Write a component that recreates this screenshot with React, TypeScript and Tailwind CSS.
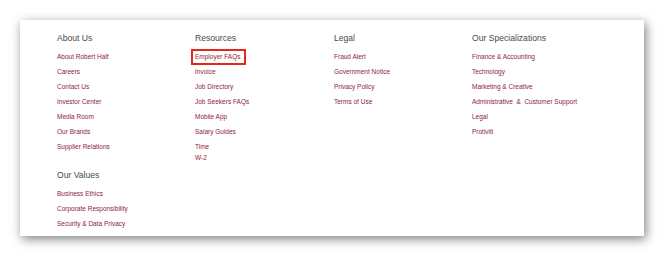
import React from 'react';

type Col = { title: string; links: string[] };

const FooterLink = ({ label, boxed }: { label: string; boxed?: boolean }) => (
  <li className="leading-[15px]">
    {boxed ? (
      <span className="inline-block leading-[8px] pr-[1px] outline-2 outline-solid outline-[#e0281c] outline-offset-[2px]">
        {label}
      </span>
    ) : (
      label
    )}
  </li>
);

const Heading = ({ children, className = '' }: { children: React.ReactNode; className?: string }) => (
  <h3 className={`text-[8.6px] leading-[12px] text-[#4a4a4a] ${className}`}>{children}</h3>
);

const LinkList = ({ links, boxed }: { links: string[]; boxed?: string }) => (
  <ul className="mt-[4.5px] text-[6.5px] text-[#8e1b3e]">
    {links.map((l) => (
      <FooterLink key={l} label={l} boxed={l === boxed} />
    ))}
  </ul>
);

const App = () => {
  const about: Col = {
    title: 'About Us',
    links: ['About Robert Half', 'Careers', 'Contact Us', 'Investor Center', 'Media Room', 'Our Brands', 'Supplier Relations'],
  };
  const values: Col = {
    title: 'Our Values',
    links: ['Business Ethics', 'Corporate Responsibility', 'Security & Data Privacy'],
  };
  const resources = ['Employer FAQs', 'Invoice', 'Job Directory', 'Job Seekers FAQs', 'Mobile App', 'Salary Guides'];
  const legal: Col = { title: 'Legal', links: ['Fraud Alert', 'Government Notice', 'Privacy Policy', 'Terms of Use'] };
  const specs: Col = {
    title: 'Our Specializations',
    links: [
      'Finance & Accounting',
      'Technology',
      'Marketing & Creative',
      'Administrative\u00a0 &\u00a0 Customer Support',
      'Legal',
      'Protiviti',
    ],
  };

  return (
    <div className="w-[664px] h-[256px] bg-white pt-[20px] pl-[20px]" style={{ fontFamily: '"Liberation Sans", Arial, sans-serif' }}>
      <div className="w-[624px] h-[216px] bg-white shadow-[2px_3px_10px_rgba(0,0,0,0.5)] pl-[37px] pt-[12px] grid grid-cols-[138px_139px_138px_1fr]">
        <div>
          <Heading>{about.title}</Heading>
          <LinkList links={about.links} />
          <Heading className="mt-[15.5px]">{values.title}</Heading>
          <LinkList links={values.links} />
        </div>
        <div>
          <Heading>Resources</Heading>
          <LinkList links={resources} boxed="Employer FAQs" />
          <ul className="text-[6.5px] text-[#8e1b3e] leading-[11px] mt-[2px]">
            <li>Time</li>
            <li>W-2</li>
          </ul>
        </div>
        <div>
          <Heading>{legal.title}</Heading>
          <LinkList links={legal.links} />
        </div>
        <div>
          <Heading>{specs.title}</Heading>
          <LinkList links={specs.links} />
        </div>
      </div>
    </div>
  );
};

export default App;
